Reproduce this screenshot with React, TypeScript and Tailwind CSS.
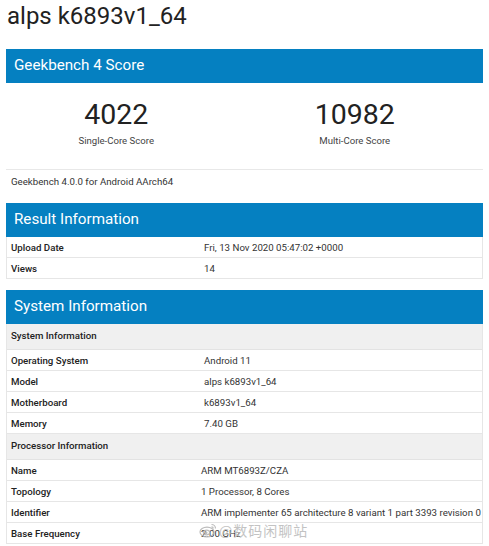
type Row = { label: string; value: string };

const resultRows: Row[] = [
  { label: "Upload Date", value: "Fri, 13 Nov 2020 05:47:02 +0000" },
  { label: "Views", value: "14" },
];

const systemRows: Row[] = [
  { label: "Operating System", value: "Android 11" },
  { label: "Model", value: "alps k6893v1_64" },
  { label: "Motherboard", value: "k6893v1_64" },
  { label: "Memory", value: "7.40 GB" },
];

const processorRows: Row[] = [
  { label: "Name", value: "ARM MT6893Z/CZA" },
  { label: "Topology", value: "1 Processor, 8 Cores" },
  { label: "Identifier", value: "ARM implementer 65 architecture 8 variant 1 part 3393 revision 0" },
  { label: "Base Frequency", value: "2.00 GHz" },
];

function SectionHeader({ title }: { title: string }) {
  return (
    <div className="h-[34px] bg-[#0580c1] px-[8px] flex items-center text-white text-[15.2px] leading-none">
      {title}
    </div>
  );
}

function InfoRows({ rows, valueCol }: { rows: Row[]; valueCol: string }) {
  return (
    <>
      {rows.map((r) => (
        <div
          key={r.label}
          className="h-[21px] flex items-center border-b border-[#e6e6e6] text-[9.7px] text-[#333] pt-[2px]"
        >
          <div className={`${valueCol} shrink-0 pl-[4px] font-medium text-[#222]`}>{r.label}</div>
          <div className="whitespace-nowrap">{r.value}</div>
        </div>
      ))}
    </>
  );
}

function SubHeader({ title }: { title: string }) {
  return (
    <div className="h-[26px] flex items-center bg-[#f0f0f0] border-b border-[#e3e3e3] pl-[4px] text-[9.7px] font-medium text-[#222]">
      {title}
    </div>
  );
}

function Score({ value, label }: { value: string; label: string }) {
  return (
    <div className="flex flex-col items-center pr-[18px]">
      <div className="text-[28.5px] leading-[36px] text-[#222]">{value}</div>
      <div className="text-[9.6px] leading-[14px] text-[#444] mt-[1px]">{label}</div>
    </div>
  );
}

function Watermark() {
  return (
    <div className="absolute left-[199px] top-[522px] flex items-center gap-[2px] text-[#bdbdbd] opacity-90">
      <svg width="18" height="16" viewBox="0 0 18 16" fill="none" stroke="#b5b5b5" strokeWidth="1.2">
        <ellipse cx="8" cy="10" rx="7" ry="4.8" />
        <ellipse cx="7.5" cy="10.5" rx="3.2" ry="2.4" />
        <circle cx="7" cy="10.8" r="0.9" fill="#b5b5b5" />
        <path d="M12.5 2.5a4 4 0 0 1 4 4" />
        <path d="M12.5 4.8a1.8 1.8 0 0 1 1.8 1.8" />
      </svg>
      <span className="text-[14px] leading-none tracking-[1px]" style={{ fontFamily: '"Noto Sans CJK SC", sans-serif' }}>
        @数码闲聊站
      </span>
    </div>
  );
}

export default function App() {
  return (
    <div
      className="relative w-[489px] h-[546px] overflow-hidden bg-white"
      style={{ fontFamily: "Roboto, 'Liberation Sans', sans-serif" }}
    >
      <div className="mt-[2px] h-[28px] pl-[7px] text-[24px] leading-[28px] text-[#222]">alps k6893v1_64</div>

      <div className="mx-[6px] mt-[19px]">
        <SectionHeader title="Geekbench 4 Score" />
        <div className="grid grid-cols-2 pt-[14px] h-[87px] border-b border-[#e8e8e8]">
          <Score value="4022" label="Single-Core Score" />
          <Score value="10982" label="Multi-Core Score" />
        </div>
        <div className="pl-[5px] pt-[5px] text-[9.7px] leading-[14px] text-[#333]">
          Geekbench 4.0.0 for Android AArch64
        </div>

        <div className="mt-[14px]">
          <SectionHeader title="Result Information" />
          <div className="border-x border-[#e6e6e6]">
            <InfoRows rows={resultRows} valueCol="w-[197px]" />
          </div>
        </div>

        <div className="mt-[11px]">
          <SectionHeader title="System Information" />
          <div className="border-x border-[#e6e6e6]">
            <SubHeader title="System Information" />
            <InfoRows rows={systemRows} valueCol="w-[197px]" />
            <SubHeader title="Processor Information" />
            <InfoRows rows={processorRows} valueCol="w-[194px]" />
          </div>
        </div>
      </div>

      <Watermark />
    </div>
  );
}
